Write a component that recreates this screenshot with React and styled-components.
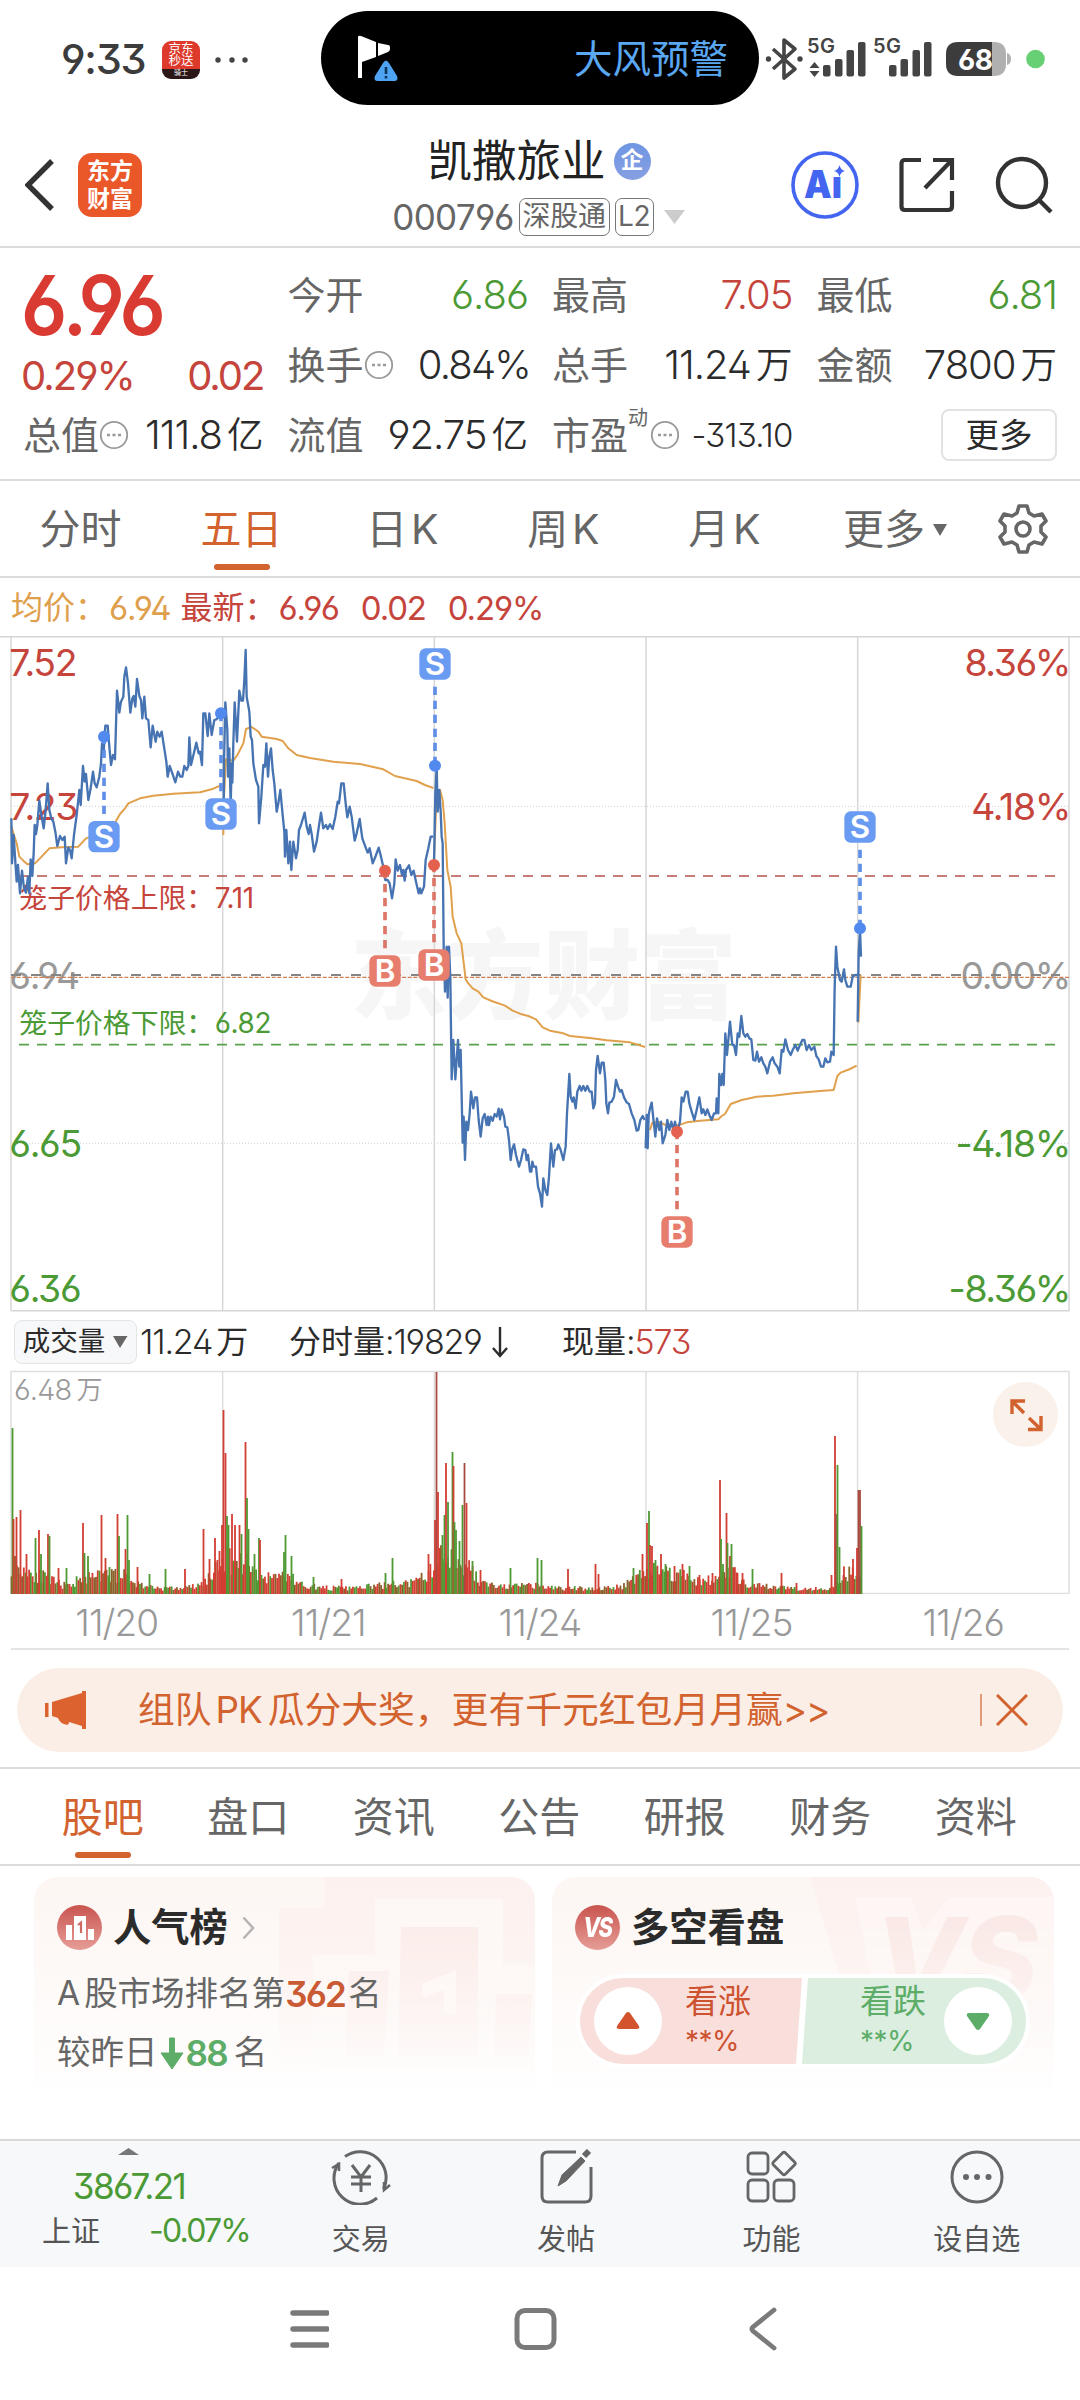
import React from "react";
import styled, { createGlobalStyle } from "styled-components";

const RED = "#c5443b";
const GREEN = "#4b9a35";
const ORANGE = "#d2622e";
const LINE = "#dcdcdc";
const FONT = `Inter, "Noto Sans CJK SC", sans-serif`;

// price and average lines, one entry per trading day
const days = [
  {
    dx: 0,
    dy: 0,
    price:
      "34,565 36,700 41,615 44,665 50,755 54,705 60,790 66,722 72,775 78,788 84,740 88,790 92,688 97,738 101,670 104,585 108,612 112,585 118,512 124,555 131,595 137,540 143,460 148,540 154,565 160,575 166,605 172,648 180,618 187,630 194,620 198,700 205,652 210,660 215,685 222,615 230,555 238,480 242,525 249,408 254,455 258,432 265,510 272,475 279,425 284,460 290,472 298,440 303,400 306,340 311,365 316,287 323,287 328,350 333,405 339,375 345,388 351,182 358,248 363,215 370,200 373,140 378,112 384,160 391,248 397,205 401,198 406,230 411,147 418,198 423,210 427,265 433,200 438,265 445,270 452,352 458,287 467,335 472,305 479,320 485,305 492,350 499,395 503,440 509,408 517,430 526,457 534,425 541,440 547,440 553,408 560,420 565,408 568,322 573,405 581,372 589,338 596,370 600,365 606,405 610,250 616,250 623,318 628,250 635,315 643,270 649,268 655,262 665,250",
    avg:
      "34,590 42,615 50,640 58,680 70,692 82,703 105,700 125,680 148,655 185,652 235,650 258,625 300,610 345,578 360,552 375,535 385,520 420,505 460,497 520,491 600,487 635,478 665,465"
  },
  {
    dx: 0,
    dy: 0,
    price:
      "671,560 672,400 676,217 682,300 684,440 688,355 692,528 695,400 697,458 700,340 704,217 711,335 718,182 724,212 729,212 733,150 737,60 740,200 748,245 752,320 756,330 760,400 768,450 775,470 777,580 784,500 790,405 795,410 799,340 804,440 808,380 813,355 818,420 823,460 830,545 835,520 841,480 847,545 853,605 855,680 859,600 865,700 870,635 874,720 880,635 888,685 893,660 897,600 903,585 914,548 920,590 926,612 930,585 935,612 942,665 950,635 955,600 963,548 970,595 978,585 983,597 990,583 998,597 1006,560 1013,515 1017,520 1024,460 1031,460 1037,520 1042,562 1049,530 1055,560 1064,632 1070,610 1079,567 1087,625 1098,655 1103,668 1109,655 1118,700 1127,678 1136,653 1143,680 1152,720 1156,750 1163,750 1169,760 1176,805 1183,760 1187,688 1193,722 1200,705 1206,735 1210,720 1214,752 1218,720 1227,706 1234,735 1241,722 1248,755 1256,790 1260,775 1264,790 1272,770 1277,690 1285,655 1292,620 1300,620",
    avg:
      "670,615 672,500 678,388 700,392 712,375 730,340 738,297 755,291 775,305 785,320 830,327 848,333 865,355 890,375 930,384 1000,395 1080,402 1150,418 1185,438 1250,453 1275,465 1300,474"
  },
  {
    dx: 1260,
    dy: 810,
    price:
      "42,-105 46,-320 50,-400 53,-265 58,-330 62,-265 65,-190 68,-170 71,140 75,275 80,140 83,293 87,140 91,235 95,538 100,420 106,538 114,420 118,500 122,450 128,728 131,650 135,780 139,665 144,690 149,640 153,575 160,625 165,592 171,592 176,660 182,710 188,655 194,642 200,675 204,650 207,675 212,650 218,662 224,642 230,650 236,626 240,658 245,628 252,650 256,680 262,682 267,720 272,780 276,750 282,733 288,765 297,800 303,780 310,748 316,750 320,780 324,765 330,815 334,815 337,785 341,800 348,800 354,860 360,880 366,920 370,835 376,870 382,885 387,830 393,730 400,800 405,750 411,748 415,733 422,750 430,780 437,740 441,640 448,522 452,590 457,605 461,592 467,625 472,575 479,558 484,572 490,558 496,572 502,558 509,575 515,575 520,625 525,610 528,510 533,468 540,520 545,488 551,488 556,540 559,610 564,640 568,608 575,605 582,590 588,540 594,560 600,575 605,570 612,592 620,607 627,612 635,640 643,660 650,692 655,690 661,660 668,648 674,660",
    avg:
      "42,-120 48,-270 60,-330 68,-300 74,-230 82,-90 92,-40 98,50 110,100 124,130 130,180 137,238 145,250 158,265 175,275 190,292 215,303 255,317 278,332 305,343 325,348 348,358 368,382 390,392 430,400 450,408 510,414 560,421 630,427 650,433 675,441"
  },
  {
    dx: 1260,
    dy: 810,
    price:
      "677,745 680,645 683,745 686,645 690,625 695,608 700,655 706,710 711,655 718,690 723,665 728,730 736,705 742,660 748,690 754,665 760,690 765,665 772,695 780,665 785,592 790,605 797,575 803,575 808,610 815,635 823,660 830,630 838,592 845,640 850,628 856,645 862,628 868,645 875,660 882,640 888,640 890,595 895,640 898,522 903,555 907,522 911,555 916,400 921,465 925,420 930,365 937,435 942,435 948,465 953,400 958,410 964,348 970,400 976,410 982,402 988,415 994,418 1000,480 1006,482 1011,455 1017,485 1024,472 1030,490 1036,500 1042,520 1050,485 1058,472 1064,490 1072,500 1079,520 1085,450 1090,455 1096,418 1104,450 1112,465 1118,450 1126,435 1133,452 1140,435 1147,420 1153,420 1160,450 1167,435 1174,450 1183,440 1189,468 1196,478 1203,500 1210,500 1216,475 1222,487 1230,485 1234,455 1241,465 1244,260 1248,140 1252,200 1260,240 1265,245 1272,208 1276,240 1282,260 1292,260 1298,230 1306,225 1313,225",
    avg:
      "690,690 697,668 715,666 740,676 775,676 800,667 840,662 895,658 905,648 915,642 932,612 965,600 1010,590 1060,587 1120,580 1200,573 1241,570 1252,528 1262,518 1290,507 1310,497"
  },
  {
    dx: 1260,
    dy: 810,
    price: "1313,365 1316,160 1320,90 1323,170",
    avg: "1315,368 1322,225"
  }
];

const trades = [
  { type: "S", x: 312, y: 620, dot: 320 },
  { type: "S", x: 663, y: 552, dot: 250 },
  { type: "S", x: 1305, y: 102, dot: 407 },
  { type: "S", x: 2580, y: 591, dot: 895 },
  { type: "B", x: 1155, y: 1023, dot: 722 },
  { type: "B", x: 1302, y: 1005, dot: 705 },
  { type: "B", x: 2031, y: 1806, dot: 1505 }
];

const axis = [
  { y: 138, left: "7.52", right: "8.36%", color: RED },
  { y: 571, left: "7.23", right: "4.18%", color: RED },
  { y: 1077, left: "6.94", right: "0.00%", color: "#999" },
  { y: 1581, left: "6.65", right: "-4.18%", color: GREEN },
  { y: 2016, left: "6.36", right: "-8.36%", color: GREEN }
];

// volume peaks: x, height, colour
const peaks = `12 166 g,13 75 r,16 77 r,20 84 r,26 40 r,35 56 g,38.5 64 r,40.5 40 g,47.5 60 r,49 58 g,58 26 r,66 26 g,
82.5 71 r,84 41 g,87.5 38 g,101 79 r,105 36 r,109 27 g,117 80 r,118.5 58 g,127 79 g,128.5 34 g,125 45 r,137 27 r,149 20 g,
165 25 g,184.5 25 r,203 65 r,209 35 r,214.5 56 r,219 43 r,221.5 69 r,223 184 r,225 141 r,226.5 78 g,228 69 g,231.5 80 r,
234.5 69 r,239 69 r,241 60 g,245 152 r,246.5 96 g,248 65 g,254 40 g,258.5 56 g,259.5 54 r,285 59 g,283.5 42 g,291 38 g,
313 17 g,341 15 r,392 36 g,385 21 g,428 40 r,434.5 74 r,436 222 d,437.5 102 r,439 46 r,442 59 g,444 79 g,445.5 131 r,
447.5 92 g,452 142 g,453 128 r,454 72 g,455.5 64 g,459 53 g,462 89 g,464 131 d,466 91 r,472 33 g,480 24 r,510 26 g,537 36 g,
541 34 g,567.5 25 r,595 30 r,598 20 r,633 26 g,642 40 r,646.5 71 r,648.5 83 g,649.5 49 r,651.5 48 r,655 34 g,660.5 40 r,
665 30 g,674 28 r,682 30 r,689 28 g,699 19 r,712 21 r,719.5 114 r,720.5 55 g,722.5 30 g,726 81 r,727 51 g,729.5 38 r,
731 50 g,737 21 r,742 21 r,752 25 g,781 21 r,796 11 r,831 19 r,834.5 158 r,835.5 80 d,837 129 g,839 47 g,843 19 r,
852.5 35 r,856.5 46 r,858 104 d,859.5 104 d,861 68 g`
  .split(",")
  .map(s => s.trim().split(" "))
  .map(([x, h, c]) => ({ x: +x, h: +h, c }));

const envelope = [
  [11, 44], [25, 34], [40, 26], [55, 16], [70, 10], [80, 26], [88, 22], [105, 26], [120, 28], [135, 15],
  [150, 10], [165, 8], [180, 8], [200, 12], [215, 32], [225, 48], [245, 46], [262, 22], [285, 28], [300, 14],
  [320, 9], [350, 8], [380, 12], [415, 16], [430, 32], [440, 50], [455, 52], [468, 38], [480, 16], [500, 10],
  [530, 12], [560, 8], [600, 8], [620, 10], [640, 30], [655, 34], [680, 28], [700, 18], [715, 20], [730, 34],
  [745, 12], [800, 8], [830, 8], [845, 30], [861, 26]
];

const fill = { r: "#d33e33", g: "#4f9932", d: "#a84a3f", m: "#8a5f28" };

function level(x) {
  const i = Math.max(1, envelope.findIndex(p => p[0] >= x));
  const [x0, a] = envelope[i - 1];
  const [x1, b] = envelope[i];
  return a + ((b - a) * (x - x0)) / (x1 - x0);
}

const floor = [];
let seed = 11;
for (let x = 11; x < 860; x += 1.76) {
  seed = (seed * 16807) % 2147483647;
  const a = seed / 2147483647;
  seed = (seed * 16807) % 2147483647;
  const b = seed / 2147483647;
  floor.push({ x, h: Math.max(3, level(x) * (0.4 + 0.6 * a)), c: b > 0.55 ? "r" : b > 0.25 ? "m" : "g" });
}

const GlobalStyle = createGlobalStyle`
  * { box-sizing: border-box; }
  body {
    margin: 0;
    background: #fff;
    font-family: ${FONT};
    font-feature-settings: "ss01";
    line-height: 1;
    color: #2b2b2b;
  }
  svg { display: block; flex: none; }
`;

function StatusBar() {
  return (
    <Status>
      <StatusLeft>
        <Clock>9:33</Clock>
        <JdIcon>
          <span>京东</span>
          <span>秒送</span>
          <small>骑士</small>
        </JdIcon>
        <svg width="34" height="8" fill="#444">
          <circle cx="3" cy="4" r="2.7" />
          <circle cx="17" cy="4" r="2.7" />
          <circle cx="30" cy="4" r="2.7" />
        </svg>
      </StatusLeft>
      <Island>
        <svg width="42" height="50" viewBox="0 0 42 50">
          <path d="M1 3v41h4V28l14-5V8L4 2Q1 1 1 3z" fill="#fff" />
          <path d="M21 9v13l10-4q2-1 2-3v-2q0-2-2-2z" fill="#fff" />
          <path d="M26 29q3-5 6 0l8 13q2 5-3 5H21q-5 0-3-5z" fill="#4fa3f3" />
          <path d="M29 33v7M29 42v2.5" stroke="#0b3558" strokeWidth="2.6" />
        </svg>
        <span>大风预警</span>
      </Island>
      <svg width="321" height="70" viewBox="759 20 321 70" fontFamily={FONT}>
        <path d="M773 49l22 20-11 9V40l11 9-22 20" fill="none" stroke="#444" strokeWidth="3.6" strokeLinejoin="round" />
        <circle cx="768.5" cy="59" r="2.7" fill="#444" />
        <circle cx="800" cy="59" r="2.7" fill="#444" />
        <g fill="#444">
          <text x="807" y="53" fontSize="20" fontWeight="600" textLength="28">5G</text>
          <text x="873" y="53" fontSize="20" fontWeight="600" textLength="28">5G</text>
          <path d="M814.500 62l5 6h-10zM814.500 77l5-6h-10z" />
          <rect x="823" y="65" width="7.500" height="11.500" rx="2" />
          <rect x="835" y="59" width="7.500" height="17.500" rx="2" />
          <rect x="846.500" y="50" width="7.500" height="26.500" rx="2" />
          <rect x="858" y="42" width="7.500" height="34.500" rx="2" />
          <rect x="889" y="65" width="7.500" height="11.500" rx="2" />
          <rect x="900.500" y="59" width="7.500" height="17.500" rx="2" />
          <rect x="912.500" y="50" width="7.500" height="26.500" rx="2" />
          <rect x="924" y="42" width="7.500" height="34.500" rx="2" />
        </g>
        <path d="M990 42h4q12 0 12 12v10q0 12-12 12h-4zM1007 53q4 1 4 6t-4 6z" fill="#b0b0b0" />
        <path d="M958 42h34v34h-34q-12 0-12-12V54q0-12 12-12z" fill="#3c3c3c" />
        <text x="958" y="69.500" fontSize="28" fontWeight="700" fill="#fff" textLength="35">68</text>
        <circle cx="1035.500" cy="59" r="9.300" fill="#67cf74" />
      </svg>
    </Status>
  );
}

function Header() {
  return (
    <HeaderBar>
      <HeaderSide>
        <svg width="30" height="54" viewBox="0 0 30 54">
          <path d="M27 3L3 27l24 24" fill="none" stroke="#333" strokeWidth="5.400" />
        </svg>
        <AppLogo>
          <span>东方</span>
          <span>财富</span>
        </AppLogo>
      </HeaderSide>
      <Stock>
        <StockName>
          凯撒旅业<Badge>企</Badge>
        </StockName>
        <StockCode>
          <span>000796</span>
          <Tag $w={91}>深股通</Tag>
          <Tag $w={39}>L2</Tag>
          <svg width="22" height="15">
            <path d="M0 0h21L10.500 14z" fill="#ccc" />
          </svg>
        </StockCode>
      </Stock>
      <HeaderSide $end>
        <svg width="68" height="68" viewBox="0 0 68 68">
          <circle cx="34" cy="34" r="32" fill="none" stroke="#4365f0" strokeWidth="3.600" />
          <text x="13" y="47" fontSize="38" fontWeight="900" fill="#4365f0" fontFamily="Inter" textLength="38" lengthAdjust="spacingAndGlyphs">
            Aı
          </text>
          <path d="M48.500 14q1 5 5.500 6-4.500 1-5.500 6-1-5-5.500-6 4.500-1 5.500-6z" fill="#4365f0" />
        </svg>
        <svg width="56" height="56" viewBox="0 0 56 56" fill="none" stroke="#333" strokeWidth="4.200">
          <path d="M22 3H6Q2.500 3 2.500 6.500v43Q2.500 53 6 53h43q4 0 4-3.500V34M34 3h19v20M52 4L26 31" />
        </svg>
        <svg width="58" height="58" viewBox="0 0 58 58" fill="none" stroke="#333" strokeWidth="4.400">
          <circle cx="27" cy="27" r="24" />
          <path d="M44 44l12 12" />
        </svg>
      </HeaderSide>
    </HeaderBar>
  );
}

function Info() {
  return (
    <svg width="30" height="30" viewBox="0 0 30 30">
      <circle cx="15" cy="15" r="13.200" fill="none" stroke="#999" strokeWidth="1.800" />
      <path d="M8 15h3M13.500 15h3M19 15h3" stroke="#999" strokeWidth="2.600" />
    </svg>
  );
}

function Cell({ label, value, unit, color, info, sup, small, tight }) {
  return (
    <CellRow>
      <Label>
        {label}
        {sup && <sup>{sup}</sup>}
        {info && <Info />}
      </Label>
      <Value $color={color} $small={small} $tight={tight}>
        {value}
        {unit && <i>{unit}</i>}
      </Value>
    </CellRow>
  );
}

function Quote() {
  return (
    <QuoteGrid>
      <Latest>
        <Price>6.96</Price>
        <Change>
          <span>0.29%</span>
          <span>0.02</span>
        </Change>
      </Latest>
      <Cell label="今开" value="6.86" color={GREEN} />
      <Cell label="最高" value="7.05" color={RED} />
      <Cell label="最低" value="6.81" color={GREEN} />
      <Cell label="换手" value="0.84%" info tight />
      <Cell label="总手" value="11.24" unit="万" />
      <Cell label="金额" value="7800" unit="万" />
      <Cell label="总值" value="111.8" unit="亿" info />
      <Cell label="流值" value="92.75" unit="亿" />
      <Cell label="市盈" sup="动" value="-313.10" info small />
      <MoreButton>更多</MoreButton>
    </QuoteGrid>
  );
}

function PeriodTabs() {
  return (
    <Periods>
      {["分时", "五日", "日\u200AK", "周\u200AK", "月\u200AK"].map(t => (
        <Tab key={t} $on={t === "五日"}>{t}</Tab>
      ))}
      <Tab $wide>
        更多
        <svg width="14" height="12">
          <path d="M0 0h14L7 12z" fill="#666" />
        </svg>
      </Tab>
      <svg width="50" height="50" viewBox="0 0 50 50" fill="none" stroke="#666" strokeWidth="3.600" strokeLinejoin="round">
        <path d="M21 2h8l2 7 5 3 8-2 4 7-5 5v6l5 5-4 7-8-2-5 3-2 7h-8l-2-7-5-3-8 2-4-7 5-5v-6l-5-5 4-7 8 2 5-3z" />
        <circle cx="25" cy="25" r="7" />
      </svg>
    </Periods>
  );
}

function PriceChart() {
  return (
    <svg width="1080" height="676" viewBox="0 18 3240 2028" fontFamily={FONT}>
      <text x="1050" y="1142" fontSize="290" fontWeight="900" fill="#f6f6f6" textLength="1160">
        东方财富
      </text>
      <g stroke="#d6d6d6" strokeWidth="4.500">
        <path d="M0 20H3240M33 2042H3208" />
        {[33, 668, 1303, 1938, 2573, 3207].map(x => (
          <path key={x} d={`M${x} 20V2042`} />
        ))}
      </g>
      <path d="M33 529H3207M33 1540H3207" stroke="#d0d0d0" strokeWidth="3" strokeDasharray="3 6" />
      {axis.map(a => (
        <g key={a.y} fill={a.color} fontSize="112" letterSpacing="-4">
          <text x="28" y={a.y}>{a.left}</text>
          <text x="3210" y={a.y} textAnchor="end">{a.right}</text>
        </g>
      ))}
      <g fill="none" strokeWidth="5">
        <path d="M57 738H3170" stroke="#b5504b" strokeDasharray="30 24" />
        <path d="M57 1244H3170" stroke="#58a14a" strokeDasharray="30 24" />
        <path d="M33 1035H3180" stroke="#858585" strokeWidth="6" strokeDasharray="30 30" />
        <path d="M33 1042H3207" stroke="#cf7f50" strokeDasharray="12 5" strokeWidth="3.500" />
      </g>
      <g fontSize="83.500">
        <text x="58" y="835" fill={RED}>笼子价格上限：</text>
        <text x="644" y="835" fill={RED} letterSpacing="-1">7.11</text>
        <text x="58" y="1208" fill={GREEN}>笼子价格下限：</text>
        <text x="644" y="1208" fill={GREEN} letterSpacing="-1">6.82</text>
      </g>
      {days.map((d, i) => (
        <g key={i} transform={`translate(${d.dx} ${d.dy})`} fill="none" strokeLinejoin="round">
          <polyline points={d.avg} stroke="#e0a04c" strokeWidth="6" />
          <polyline points={d.price} stroke="#4673b2" strokeWidth="7" />
        </g>
      ))}
      {trades.map(t => {
        const color = t.type === "S" ? "#6a9bf2" : "#e77d6d";
        const dir = t.y > t.dot ? 1 : -1;
        return (
          <g key={t.x}>
            <path d={`M${t.x} ${t.y - dir * 68}V${t.dot}`} stroke={t.type === "S" ? "#5f8fe6" : "#dd7668"} strokeWidth="11" strokeDasharray="25 17" />
            <circle cx={t.x} cy={t.dot} r="18" fill={t.type === "S" ? "#5289ee" : "#e4604f"} />
            <rect x={t.x - 47} y={t.y - 47} width="94" height="94" rx="19" fill={color} />
            <text x={t.x} y={t.y + 34} fontSize="94" fontWeight="600" fill="#fff" textAnchor="middle">{t.type}</text>
          </g>
        );
      })}
    </svg>
  );
}

function VolumeChart() {
  return (
    <VolumeBox>
      <svg width="1080" height="224" viewBox="0 0 1080 224">
        <g stroke="#dedede" strokeWidth="1.500" fill="none">
          <path d="M11 1.500H1069V223.500H11z" />
          <path d="M222.700 1V223M434.300 1V223M646 1V223M857.600 1V223" />
        </g>
        {floor.concat(peaks).map((b, i) => (
          <rect key={i} x={b.x - 0.4} y={224 - b.h} width="1.800" height={b.h} fill={fill[b.c]} />
        ))}
      </svg>
      <MaxVolume>6.48<i>万</i></MaxVolume>
      <Expand>
        <svg width="34" height="34" viewBox="0 0 34 34" fill="none" stroke={ORANGE} strokeWidth="3.400">
          <path d="M3 16V3h13M3 3l12 12M19 31.500h13V18M32 31.500L20 20" />
        </svg>
      </Expand>
    </VolumeBox>
  );
}

function Chart() {
  return (
    <div>
      <Legend>
        <span>均价：</span><b>6.94</b>
        <Latests>
          <span>最新：</span><b>6.96</b><b>0.02</b><b>0.29%</b>
        </Latests>
      </Legend>
      <PriceChart />
      <VolumeHead>
        <Select>
          成交量
          <svg width="15" height="12"><path d="M0 0h14.500L7 12z" fill="#666" /></svg>
        </Select>
        <Stat $w={149}><b>11.24</b><i>万</i></Stat>
        <Stat $w={273}>
          分时量<b>:19829</b>
          <svg width="18" height="32" viewBox="0 0 18 32" fill="none" stroke="#2b2b2b" strokeWidth="2.400">
            <path d="M9 1v29M2 22l7 8 7-8" />
          </svg>
        </Stat>
        <Stat>现量<b>:</b><b className="red">573</b></Stat>
      </VolumeHead>
      <VolumeChart />
      <Dates>
        {["11/20", "11/21", "11/24", "11/25", "11/26"].map(d => <span key={d}>{d}</span>)}
      </Dates>
    </div>
  );
}

function Promo() {
  return (
    <PromoArea>
      <Banner>
        <svg width="44" height="38" viewBox="0 0 44 38" fill="#dc6330">
          <path d="M1 12h3.500v14H1zM8 11L38 2V0h4v38h-4v-3l-13-4q0 4-5 2-4-1-6-6l-6-2z" />
        </svg>
        <BannerText>
          组队<b>PK</b>瓜分大奖，更有千元红包月月赢<em>&gt;&gt;</em>
        </BannerText>
        <Close>
          <svg width="32" height="32" viewBox="0 0 32 32" stroke={ORANGE} strokeWidth="3">
            <path d="M1 1l30 30M31 1L1 31" />
          </svg>
        </Close>
      </Banner>
    </PromoArea>
  );
}

function SectionTabs() {
  return (
    <Sections>
      {["股吧", "盘口", "资讯", "公告", "研报", "财务", "资料"].map((t, i) => (
        <Tab key={t} $on={i === 0}>{t}</Tab>
      ))}
    </Sections>
  );
}

function Cards() {
  return (
    <CardRow>
      <Card>
        <Backdrop width="256" height="225" viewBox="0 0 256 225">
          <path d="M0 31h46V0h210v225H0z" fill="#fbeeeb" opacity=".6" />
          <path d="M34 78h62V22h128v66h32v137H34z" fill="#fdf7f5" />
          <path d="M70 94h40l-5 90H66zM122 50h77v134h-80zM217 117h36l-4 67h-34z" fill="#fae9e6" opacity=".8" />
          <path d="M143 107l34-14v44h-12v-24l-22 8z" fill="#fff6f4" />
          <path d="M144 133h33v-20l-12 4v16z" fill="#fff6f4" />
        </Backdrop>
        <CardTitle>
          <Disc>
            <svg width="30" height="26" viewBox="0 0 30 26" fill="#fff">
              <path d="M1 10h6v15H1zM9 1h12v24H9zM23 14h6v11h-6z" />
              <path d="M13 10l3-2.500V18" fill="none" stroke="#cf6a64" strokeWidth="2.200" />
            </svg>
          </Disc>
          人气榜
          <svg width="14" height="24" viewBox="0 0 14 24" fill="none" stroke="#b5b5b5" strokeWidth="2.600">
            <path d="M1.500 1.500L11 12 1.500 22.500" />
          </svg>
        </CardTitle>
        <RankLine><b>A</b>股市场排名第<strong>362</strong>名</RankLine>
        <RankLine $green>
          较昨日
          <svg width="24" height="33" viewBox="0 0 24 33">
            <path d="M9.500 1h5v15H23L12 32 1 16h8.500z" fill="#5dad68" stroke="#5dad68" strokeLinejoin="round" />
          </svg>
          <strong>88</strong>名
        </RankLine>
      </Card>
      <Card>
        <Backdrop width="244" height="225" viewBox="0 0 244 225">
          <path d="M0 0h244v160H48z" fill="#fbeeeb" opacity=".6" />
          <path d="M45 20h56l12 34 26-34h105v150H75z" fill="#fdf6f4" />
          <text x="64" y="124" fontSize="116" fontWeight="800" fontStyle="italic" fill="#fae9e6" fontFamily="Inter" letterSpacing="-2">VS</text>
        </Backdrop>
        <CardTitle>
          <Disc>
            <em>VS</em>
          </Disc>
          多空看盘
        </CardTitle>
        <Vote>
          <Side $color="#cd5230" $bg="#f9dfdb">
            <Knob>
              <svg width="24" height="18"><path d="M10 1q2-2 4 0l9 13q1 3-2 3H3q-3 0-2-3z" fill="#d4532f" /></svg>
            </Knob>
            <VoteText>看涨<small>**%</small></VoteText>
          </Side>
          <Side $color="#5dad68" $bg="#dbeee0" $right>
            <VoteText>看跌<small>**%</small></VoteText>
            <Knob>
              <svg width="24" height="18"><path d="M10 17q2 2 4 0l9-13q1-3-2-3H3Q0 1 1 4z" fill="#5dad68" /></svg>
            </Knob>
          </Side>
        </Vote>
      </Card>
    </CardRow>
  );
}

function BottomBar() {
  return (
    <Bottom>
      <Index>
        <svg width="22" height="8"><path d="M0 7L10.500 0 21 7z" fill="#777" /></svg>
        <IndexValue>3867.21</IndexValue>
        <IndexRow>
          上证<span>-0.07%</span>
        </IndexRow>
      </Index>
      <Action>
        <svg width="60" height="56" viewBox="0 0 60 56" fill="none" stroke="#666" strokeWidth="3">
          <path d="M14 7.500A26 26 0 0 1 52.500 40M46 49A26 26 0 0 1 8 14" />
          <path d="M1 19l7-4v7M59 36l-6 5v-8" strokeWidth="2.500" />
          <path d="M21 16l9 12 9-12M30 28v15M20 28h20M20 35h20" />
        </svg>
        交易
      </Action>
      <Action>
        <svg width="54" height="56" viewBox="0 0 54 56" fill="none" stroke="#666" strokeWidth="3">
          <path d="M37 3H9Q3 3 3 9v38q0 6 6 6h37q6 0 6-6V18" />
          <path d="M19 37l4-11L42 8l4 4-19 20z" fill="#666" strokeWidth="1" />
          <path d="M45 7l5-5" strokeWidth="6" />
        </svg>
        发帖
      </Action>
      <Action>
        <svg width="52" height="56" viewBox="0 0 52 56" fill="none" stroke="#666" strokeWidth="2.800">
          <rect x="3" y="4" width="20" height="21" rx="4" />
          <rect x="3" y="31" width="20" height="21" rx="4" />
          <rect x="29" y="31" width="20" height="21" rx="4" />
          <path d="M37.500 4q1.500-1.500 3 0l9 9q1.500 1.500 0 3l-9 9q-1.500 1.500-3 0l-9-9q-1.500-1.500 0-3z" />
        </svg>
        功能
      </Action>
      <Action>
        <svg width="56" height="56" viewBox="0 0 56 56">
          <circle cx="28" cy="28" r="25" fill="none" stroke="#666" strokeWidth="3" />
          <g fill="#666">
            <circle cx="17" cy="28" r="3" />
            <circle cx="28" cy="28" r="3" />
            <circle cx="39.500" cy="28" r="3" />
          </g>
        </svg>
        设自选
      </Action>
    </Bottom>
  );
}

function SystemNav() {
  return (
    <SystemBar>
      <svg width="39" height="44" viewBox="0 0 39 44" stroke="#7a7a7a" strokeWidth="5.500" strokeLinecap="round">
        <path d="M3 6h34M3 22h34M3 38h34" />
      </svg>
      <svg width="44" height="44" viewBox="0 0 44 44">
        <rect x="3" y="3.500" width="37" height="37" rx="8" fill="none" stroke="#7a7a7a" strokeWidth="5" />
      </svg>
      <svg width="28" height="44" viewBox="0 0 28 44">
        <path d="M25 3L4 20q-2 2 0 4l21 17" fill="none" stroke="#7a7a7a" strokeWidth="4.800" strokeLinecap="round" />
      </svg>
    </SystemBar>
  );
}

export default function App() {
  return (
    <Page>
      <GlobalStyle />
      <StatusBar />
      <Header />
      <Quote />
      <PeriodTabs />
      <Chart />
      <Promo />
      <SectionTabs />
      <Cards />
      <BottomBar />
      <SystemNav />
    </Page>
  );
}

const Page = styled.div`
  width: 1080px;
  height: 2400px;
  overflow: hidden;
  display: flex;
  flex-direction: column;
`;

const Status = styled.div`
  height: 113px;
  flex: none;
  display: flex;
  align-items: center;
  & > svg {
    margin-top: -4px;
  }
`;

const StatusLeft = styled.div`
  width: 321px;
  padding-left: 61px;
  display: flex;
  align-items: center;
  margin-top: 6px;
  & > svg {
    margin-left: 15px;
  }
`;

const Clock = styled.div`
  width: 101px;
  font-size: 41.5px;
  font-weight: 500;
  letter-spacing: -0.03em;
  color: #3c3c3c;
`;

const JdIcon = styled.div`
  width: 38px;
  height: 38px;
  border-radius: 9px;
  overflow: hidden;
  background: linear-gradient(#dd3a2c 73%, #2b1717 73%);
  color: #fff;
  font-size: 12.5px;
  text-align: center;
  padding-top: 2px;
  span {
    display: block;
    line-height: 12.5px;
  }
  small {
    display: block;
    font-size: 7px;
    line-height: 9px;
  }
`;

const Island = styled.div`
  width: 438px;
  height: 94px;
  border-radius: 47px;
  background: #000;
  color: #5aa7f2;
  font-size: 38.5px;
  display: flex;
  align-items: center;
  justify-content: space-between;
  padding: 2px 31px 0 36px;
  margin-top: 3px;
`;

const HeaderBar = styled.div`
  height: 135px;
  flex: none;
  border-bottom: 2px solid ${LINE};
  display: flex;
  justify-content: space-between;
  padding: 0 27px 0 25px;
`;

const HeaderSide = styled.div`
  width: 270px;
  display: flex;
  align-items: center;
  gap: ${p => (p.$end ? 40 : 23)}px;
  justify-content: ${p => (p.$end ? "flex-end" : "flex-start")};
  padding-top: 10px;
`;

const AppLogo = styled.div`
  width: 64px;
  height: 64px;
  border-radius: 14px;
  background: #ea582a;
  color: #fff;
  font-size: 23px;
  font-weight: 700;
  text-align: center;
  padding-top: 4px;
  span {
    display: block;
    line-height: 28px;
  }
`;

const Stock = styled.div`
  display: flex;
  flex-direction: column;
  align-items: center;
  padding-top: 24px;
`;

const StockName = styled.div`
  display: flex;
  align-items: center;
  font-size: 44.5px;
  line-height: 48px;
  color: #222;
`;

const Badge = styled.span`
  width: 37px;
  height: 37px;
  border-radius: 50%;
  margin-left: 8px;
  background: linear-gradient(#6f96e3, #869fe2);
  color: #fff;
  font-size: 23px;
  font-weight: 700;
  line-height: 35px;
  text-align: center;
`;

const StockCode = styled.div`
  display: flex;
  align-items: center;
  margin-top: 13px;
  height: 38px;
  gap: 5px;
  font-size: 35px;
  color: #666;
  letter-spacing: -0.02em;
  svg {
    margin-left: 5px;
  }
`;

const Tag = styled.span`
  width: ${p => p.$w}px;
  height: 38px;
  border: 1.5px solid #777;
  border-radius: 7px;
  font-size: 28px;
  line-height: 34px;
  text-align: center;
  letter-spacing: -0.3px;
`;

const QuoteGrid = styled.div`
  height: 233px;
  flex: none;
  border-bottom: 2px solid ${LINE};
  display: grid;
  grid-template-columns: repeat(4, 240.5px);
  grid-template-rows: repeat(3, 70px);
  column-gap: 24px;
  padding: 12px 0 0 23px;
`;

const Latest = styled.div`
  grid-row: span 2;
`;

const Price = styled.div`
  margin-top: 5px;
  font-size: 82px;
  font-weight: 600;
  letter-spacing: -0.06em;
  line-height: 82px;
  color: #d93a32;
  transform: scaleX(0.935);
  transform-origin: left;
  margin-left: -2px;
`;

const Change = styled.div`
  display: flex;
  justify-content: space-between;
  margin: 9px 0 0 -2px;
  font-size: 40px;
  letter-spacing: -0.05em;
  color: ${RED};
`;

const CellRow = styled.div`
  display: flex;
  align-items: center;
  justify-content: space-between;
  white-space: nowrap;
`;

const Label = styled.span`
  display: flex;
  align-items: center;
  font-size: 38px;
  color: #666;
  sup {
    font-size: 20px;
    align-self: flex-start;
    margin-top: -8px;
    margin-right: 2px;
  }
`;

const Value = styled.span`
  display: flex;
  align-items: center;
  font-size: ${p => (p.$small ? 33 : 40)}px;
  font-weight: 350;
  letter-spacing: ${p => (p.$tight ? -0.045 : -0.025)}em;
  margin-right: ${p => (p.$tight ? -2 : 0)}px;
  color: ${p => p.$color || "#2b2b2b"};
  i {
    font-style: normal;
    font-size: 36.5px;
    margin-left: 5px;
    letter-spacing: 0;
  }
`;

const MoreButton = styled.button`
  width: 116px;
  height: 52px;
  align-self: center;
  justify-self: end;
  border: 2px solid #e2e2e2;
  border-radius: 8px;
  background: #fff;
  font: 33.5px/44px ${FONT};
  color: #2b2b2b;
  padding: 0;
`;

const Periods = styled.div`
  height: 97px;
  flex: none;
  display: flex;
  align-items: center;
  border-bottom: 2px solid ${LINE};
  & > svg {
    margin-left: 13px;
  }
`;

const Tab = styled.div`
  flex: none;
  width: ${p => (p.$wide ? 180 : 161)}px;
  height: 100%;
  display: flex;
  align-items: center;
  justify-content: center;
  gap: 8px;
  position: relative;
  font-size: 41px;
  padding-top: 2px;
  color: ${p => (p.$on ? ORANGE : "#666")};
  &::after {
    content: "";
    display: ${p => (p.$on ? "block" : "none")};
    position: absolute;
    bottom: 6px;
    left: calc(50% - 28px);
    width: 56px;
    height: 6px;
    border-radius: 3px;
    background: ${ORANGE};
  }
`;

const Legend = styled.div`
  height: 58px;
  display: flex;
  align-items: center;
  padding: 2px 0 0 11px;
  font-size: 32px;
  color: #dfa04e;
  b {
    font-weight: 400;
    font-size: 33px;
    letter-spacing: -0.035em;
    margin-left: 2px;
  }
`;

const Latests = styled.div`
  display: flex;
  align-items: center;
  margin-left: 10px;
  color: ${RED};
  b + b {
    margin-left: 22px;
  }
`;

const VolumeHead = styled.div`
  height: 58px;
  display: flex;
  align-items: center;
  padding: 1px 0 0 14px;
  i {
    font-style: normal;
  }
`;

const Select = styled.div`
  width: 123px;
  height: 44px;
  display: flex;
  align-items: center;
  justify-content: center;
  gap: 8px;
  border: 1.5px solid #e3e4e6;
  border-radius: 8px;
  background: #f7f8fa;
  font-size: 27.5px;
  margin-right: 3px;
`;

const Stat = styled.div`
  width: ${p => (p.$w ? p.$w + "px" : "auto")};
  display: flex;
  align-items: center;
  font-size: 32px;
  b {
    font-weight: 350;
    font-size: 34px;
    letter-spacing: -0.035em;
  }
  i {
    margin-left: 4px;
  }
  svg {
    margin-left: 9px;
  }
  .red {
    color: ${RED};
  }
`;

const VolumeBox = styled.div`
  position: relative;
  height: 224px;
`;

const MaxVolume = styled.div`
  position: absolute;
  left: 14px;
  top: 5px;
  display: flex;
  align-items: center;
  color: #999;
  font-size: 29px;
  font-weight: 350;
  letter-spacing: -0.03em;
  i {
    font-style: normal;
    font-size: 26px;
    margin-left: 5px;
  }
`;

const Expand = styled.div`
  position: absolute;
  right: 22px;
  top: 12px;
  width: 65px;
  height: 65px;
  border-radius: 50%;
  background: #fbf1eb;
  display: flex;
  align-items: center;
  justify-content: center;
`;

const Dates = styled.div`
  height: 56px;
  margin: 0 11px;
  display: grid;
  grid-template-columns: repeat(5, 1fr);
  align-items: center;
  text-align: center;
  border-bottom: 2px solid #e4e4e4;
  font-size: 37px;
  font-weight: 350;
  letter-spacing: -0.025em;
  padding-top: 2px;
  color: #999;
`;

const PromoArea = styled.div`
  height: 119px;
  flex: none;
  padding: 18px 17px 0;
  border-bottom: 2px solid ${LINE};
`;

const Banner = styled.div`
  height: 84px;
  border-radius: 42px;
  background: #fbeee6;
  display: flex;
  align-items: center;
  padding: 0 35px 0 27px;
  color: ${ORANGE};
`;

const BannerText = styled.div`
  flex: 1;
  margin-left: 50px;
  font-size: 36.8px;
  white-space: nowrap;
  b {
    font-weight: 400;
    margin: 0 6px 0 4px;
    letter-spacing: -0.03em;
  }
  em {
    font-style: normal;
    letter-spacing: -0.03em;
  }
`;

const Close = styled.div`
  border-left: 2px solid #e09a78;
  padding-left: 14px;
`;

const Sections = styled.div`
  height: 97px;
  flex: none;
  display: flex;
  padding: 0 30px;
  border-bottom: 2px solid ${LINE};
  & > div {
    width: 145.5px;
  }
`;

const CardRow = styled.div`
  height: 273px;
  flex: none;
  display: grid;
  grid-template-columns: 501px 502px;
  column-gap: 17px;
  padding: 11px 34px 0;
`;

const Card = styled.div`
  position: relative;
  overflow: hidden;
  height: 225px;
  border-radius: 24px;
  padding: 28px 23px 0;
  background: linear-gradient(#fdf6f3, #fefcfb 75%, #fff);
  & > * {
    position: relative;
  }
`;

const Backdrop = styled.svg`
  && {
    position: absolute;
    right: 0;
    top: 0;
    -webkit-mask-image: linear-gradient(#000 20%, transparent 88%);
    mask-image: linear-gradient(#000 20%, transparent 88%);
  }
`;

const CardTitle = styled.div`
  display: flex;
  align-items: center;
  height: 45px;
  font-size: 38.3px;
  font-weight: 700;
  color: #2b2b2b;
  & > svg {
    margin-left: 14px;
  }
`;

const Disc = styled.span`
  width: 45px;
  height: 45px;
  border-radius: 50%;
  margin-right: 11px;
  background: linear-gradient(#c9544f, #e69d97);
  display: flex;
  align-items: center;
  justify-content: center;
  em {
    color: #fff;
    font-size: 24px;
    font-weight: 800;
    letter-spacing: -0.08em;
    transform: scale(0.92, 1.15);
  }
`;

const RankLine = styled.div`
  display: flex;
  align-items: center;
  height: 34px;
  margin-top: ${p => (p.$green ? 25 : 27)}px;
  font-size: 33.5px;
  color: #666;
  svg {
    margin: 0 2px;
  }
  b {
    font-weight: 400;
    margin-right: 4px;
  }
  strong {
    font-size: 35px;
    font-weight: 600;
    letter-spacing: -0.05em;
    color: ${p => (p.$green ? "#5dad68" : "#c95a33")};
    margin-right: ${p => (p.$green ? 7 : 3)}px;
  }
`;

const Vote = styled.div`
  display: flex;
  width: 454px;
  height: 94px;
  margin: 24px 0 0 1px;
  border: 4px solid #fff;
  border-radius: 47px;
  overflow: hidden;
  background: #fff;
`;

const Side = styled.div`
  width: 226px;
  height: 86px;
  flex: none;
  display: flex;
  align-items: center;
  justify-content: ${p => (p.$right ? "flex-end" : "flex-start")};
  gap: ${p => (p.$right ? 18 : 23)}px;
  padding: 0 14px;
  margin-left: ${p => (p.$right ? "-6px" : 0)};
  color: ${p => p.$color};
  background: ${p => p.$bg};
  clip-path: ${p =>
    p.$right ? "polygon(8px 0, 100% 0, 100% 100%, 2px 100%)" : "polygon(0 0, 222px 0, 216px 100%, 0 100%)"};
`;

const Knob = styled.div`
  width: 68px;
  height: 68px;
  border-radius: 50%;
  background: #fff;
  display: flex;
  align-items: center;
  justify-content: center;
`;

const VoteText = styled.div`
  margin-top: -3px;
  font-size: 33px;
  line-height: 42px;
  small {
    display: block;
    font-size: 28px;
    line-height: 38px;
    letter-spacing: -0.02em;
  }
`;

const Bottom = styled.div`
  height: 128px;
  flex: none;
  display: grid;
  grid-template-columns: 258px repeat(4, 205.4px);
  background: #f6f8fa;
  border-top: 2px solid #d9d9d9;
`;

const Index = styled.div`
  display: flex;
  flex-direction: column;
  align-items: center;
  padding-top: 7px;
`;

const IndexValue = styled.div`
  margin-top: 13px;
  font-size: 35px;
  letter-spacing: -0.045em;
  color: ${GREEN};
`;

const IndexRow = styled.div`
  width: 208px;
  margin: 11px 0 0 34px;
  display: flex;
  align-items: center;
  justify-content: space-between;
  font-size: 29px;
  color: #555;
  span {
    font-size: 32px;
    letter-spacing: -0.055em;
    color: ${GREEN};
  }
`;

const Action = styled.div`
  display: flex;
  flex-direction: column;
  align-items: center;
  gap: 20px;
  padding-top: 8px;
  font-size: 29px;
  color: #555;
`;

const SystemBar = styled.div`
  flex: 1;
  display: flex;
  padding: 40px 304px 0 290px;
  gap: 191px;
  & > svg:nth-child(2) {
    margin-left: -6px;
  }
`;
